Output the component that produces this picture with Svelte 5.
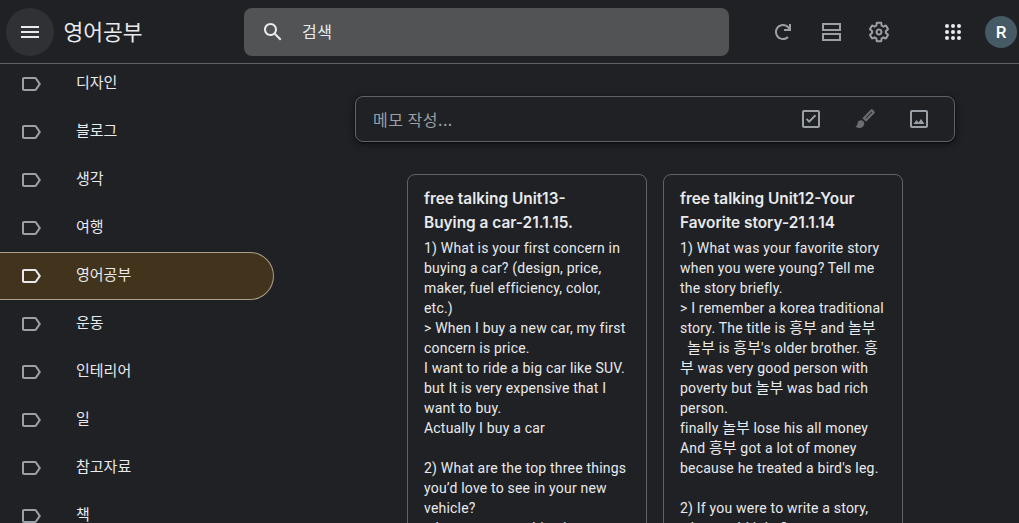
<script lang="ts">
	const labels = ['디자인', '블로그', '생각', '여행', '영어공부', '운동', '인테리어', '일', '참고자료', '책'];
	const selected = '영어공부';

	const labelPath =
		'M17.63 5.84C17.27 5.33 16.67 5 16 5L5 5.01C3.9 5.01 3 5.9 3 7v10c0 1.1.9 1.99 2 1.99L16 19c.67 0 1.27-.33 1.63-.84L22 12l-4.37-6.16zM16 17H5V7h11l3.55 5L16 17z';
	const boxPath =
		'M19 3H5c-1.1 0-2 .9-2 2v14c0 1.1.9 2 2 2h14c1.1 0 2-.9 2-2V5c0-1.1-.9-2-2-2zm0 16H5V5h14v14z';

	const notes = [
		{
			title: ['free talking Unit13-', 'Buying a car-21.1.15.'],
			lines: [
				'1) What is your first concern in',
				'buying a car? (design, price,',
				'maker, fuel efficiency, color,',
				'etc.)',
				'> When I buy a new car, my first',
				'concern is price.',
				'I want to ride a big car like SUV.',
				'but It is very expensive that I',
				'want to buy.',
				'Actually I buy a car',
				'',
				'2) What are the top three things',
				'you’d love to see in your new',
				'vehicle?',
				'> I want to see a big size'
			]
		},
		{
			title: ['free talking Unit12-Your', 'Favorite story-21.1.14'],
			lines: [
				'1) What was your favorite story',
				'when you were young? Tell me',
				'the story briefly.',
				'> I remember a korea traditional',
				'story. The title is 흥부 and 놀부',
				'  놀부 is 흥부\'s older brother. 흥',
				'부 was very good person with',
				'poverty but 놀부 was bad rich',
				'person.',
				'finally 놀부 lose his all money',
				'And 흥부 got a lot of money',
				'because he treated a bird\'s leg.',
				'',
				'2) If you were to write a story,',
				'who would it be?'
			]
		}
	];

	// hangul runs sit in a slightly larger size, latin stays at 14px
	const split = (line: string) => line.split(/([가-힣]+)/);
</script>

<div class="page">
	<header class="topbar">
		<div class="brand">
			<button class="menu" aria-label="메뉴">
				<svg width="24" height="24" viewBox="0 0 24 24"><path d="M3 18h18v-2H3v2zm0-5h18v-2H3v2zm0-7v2h18V6H3z" /></svg>
			</button>
			<span class="brand-title">영어공부</span>
		</div>
		<div class="search">
			<svg width="24" height="24" viewBox="0 0 24 24"><path d="M20.49 19l-5.73-5.73C15.53 12.2 16 10.91 16 9.5 16 5.91 13.09 3 9.5 3S3 5.91 3 9.5 5.91 16 9.5 16c1.41 0 2.7-.47 3.77-1.24L19 20.49 20.49 19zM5 9.5C5 7.01 7.01 5 9.5 5S14 7.01 14 9.5 11.99 14 9.5 14 5 11.99 5 9.5z" /></svg>
			<span>검색</span>
		</div>
		<div class="actions">
			<svg class="tool" width="24" height="24" viewBox="0 0 24 24"><path d="M13 9v2h7V4h-2v2.74C16.53 5.07 14.4 4 12 4c-2.21 0-4.21.9-5.66 2.34S4 9.79 4 12c0 4.42 3.58 8 8 8 2.21 0 4.21-.9 5.66-2.34l-1.42-1.42A5.98 5.98 0 0 1 12 18c-3.31 0-6-2.69-6-6 0-1.65.67-3.15 1.76-4.24A5.98 5.98 0 0 1 12 6a6.01 6.01 0 0 1 5.19 3H13z" /></svg>
			<svg class="tool" width="24" height="24" viewBox="0 0 24 24"><path d="M3 3h19v8H3V3zm2 2v4h15V5H5zM3 13h19v8H3v-8zm2 2v4h15v-4H5z" /></svg>
			<svg class="tool" width="24" height="24" viewBox="0 0 24 24"><path d="M13.85 22.25h-3.7c-.74 0-1.36-.54-1.45-1.27l-.27-1.89c-.27-.14-.53-.29-.79-.46l-1.8.72c-.7.26-1.47-.03-1.81-.65L2.2 15.53c-.35-.66-.2-1.44.36-1.88l1.53-1.19c-.01-.15-.02-.3-.02-.46 0-.15.01-.31.02-.46l-1.52-1.19c-.59-.45-.74-1.26-.37-1.88l1.85-3.19c.34-.62 1.11-.9 1.79-.63l1.81.73c.26-.17.52-.32.78-.46l.27-1.91c.09-.7.71-1.25 1.44-1.25h3.7c.74 0 1.36.54 1.45 1.27l.27 1.89c.27.14.53.29.79.46l1.8-.72c.71-.26 1.48.03 1.82.65l1.84 3.18c.36.66.2 1.44-.36 1.88l-1.52 1.19c.01.15.02.3.02.46s-.01.31-.02.46l1.52 1.19c.56.45.72 1.23.37 1.86l-1.86 3.22c-.34.62-1.11.9-1.8.63l-1.8-.72c-.26.17-.52.32-.78.46l-.27 1.91c-.1.68-.72 1.22-1.45 1.22zm-3.23-2h2.76l.37-2.55.53-.22c.44-.18.88-.44 1.34-.78l.45-.34 2.38.96 1.38-2.4-2.03-1.58.07-.56c.03-.26.06-.51.06-.78s-.03-.53-.06-.78l-.07-.56 2.03-1.58-1.39-2.4-2.39.96-.45-.35c-.42-.32-.87-.58-1.33-.77l-.52-.22-.37-2.55h-2.76l-.37 2.55-.53.21c-.44.19-.88.44-1.34.79l-.45.33-2.38-.95-1.39 2.39 2.03 1.58-.07.56a7 7 0 0 0-.06.79c0 .26.02.53.06.78l.07.56-2.03 1.58 1.38 2.4 2.39-.96.45.35c.43.33.86.58 1.33.77l.53.22.38 2.55zM12 15.5c-1.93 0-3.5-1.57-3.5-3.5s1.57-3.5 3.5-3.5 3.5 1.57 3.5 3.5-1.57 3.5-3.5 3.5zm0-5c-.83 0-1.5.67-1.5 1.5s.67 1.5 1.5 1.5 1.5-.67 1.5-1.5-.67-1.5-1.5-1.5z" /></svg>
			<svg class="apps" width="24" height="24" viewBox="0 0 24 24">
				{#each [4, 10, 16] as y}
					{#each [4, 10, 16] as x}
						<circle cx={x + 2} cy={y + 2} r="2" />
					{/each}
				{/each}
			</svg>
			<div class="avatar">R</div>
		</div>
	</header>

	<div class="body">
		<nav class="sidebar">
			{#each labels as label}
				<div class="nav-item" class:active={label === selected}>
					<svg width="24" height="24" viewBox="0 0 24 24"><path d={labelPath} /></svg>
					<span>{label}</span>
				</div>
			{/each}
		</nav>

		<main class="content">
			<div class="compose">
				<span class="placeholder">메모 작성...</span>
				<div class="compose-icons">
					<svg width="24" height="24" viewBox="0 0 24 24"><path d={boxPath} /><path d="M10.2 16 6.8 12.6l1.4-1.4 2 2 5.6-5.6 1.4 1.4z" /></svg>
					<svg class="dim" width="24" height="24" viewBox="0 0 24 24"><path d="M19.6 2.6l1.8 1.8c.5.5.5 1.300 0 1.800l-8.400 8.600-3.600-3.600 8.400-8.600c.5-.5 1.300-.5 1.800 0zm-.9 2-6.400 6.600.6.6 6.400-6.600-.6-.6z" /><path d="M8 13.200c-2 0-3.400 1.500-3.500 3.400-.1 1.500-.8 2.500-2 3 .9 1 2.300 1.400 3.800 1.400 2.700 0 5-2 5-4.500 0-1.900-1.500-3.300-3.300-3.300z" /></svg>
					<svg width="24" height="24" viewBox="0 0 24 24"><path d={boxPath} /><path d="M6.500 17 9.500 13l2 2.500 2.500-3.500 3.500 5z" /></svg>
				</div>
			</div>

			<div class="notes">
				{#each notes as note}
					<article class="note">
						<h3>
							{#each note.title as t}
								<span>{t}</span>
							{/each}
						</h3>
						<div class="note-text">
							{#each note.lines as line}
								<div class="line">{#each split(line) as part, i}{#if i % 2}<span class="ko">{part}</span>{:else}{part}{/if}{/each}</div>
							{/each}
						</div>
					</article>
				{/each}
			</div>
		</main>
	</div>
</div>

<style>
	:global(body) {
		background: #202124;
		overflow: hidden;
	}

	.page {
		height: 523px;
		overflow: hidden;
		background: #202124;
		color: #e8eaed;
		font-family: Roboto, "Noto Sans CJK KR", sans-serif;
	}

	.topbar {
		display: flex;
		align-items: center;
		height: 63px;
		border-bottom: 1px solid #5f6368;
	}

	.brand {
		display: flex;
		align-items: center;
		width: 244px;
		flex-shrink: 0;
		padding-left: 6px;
		box-sizing: border-box;
	}

	.menu {
		width: 48px;
		height: 48px;
		border: none;
		border-radius: 50%;
		background: #303134;
		display: flex;
		align-items: center;
		justify-content: center;
		padding: 0;
	}

	.menu svg {
		fill: #e8eaed;
	}

	.brand-title {
		margin-left: 9.5px;
		margin-top: -3px;
		font-family: "Noto Sans CJK KR", sans-serif;
		font-size: 21.5px;
		color: #e8eaed;
	}

	.search {
		width: 485px;
		height: 48px;
		flex-shrink: 0;
		background: #525355;
		border-radius: 8px;
		display: flex;
		align-items: center;
		padding-left: 17px;
		box-sizing: border-box;
		font-family: "Noto Sans CJK KR", sans-serif;
		font-size: 16px;
		letter-spacing: 0.5px;
	}

	.search svg {
		fill: #e8eaed;
	}

	.search span {
		margin-left: 17px;
		margin-top: -2px;
	}

	.actions {
		flex: 1;
		display: flex;
		align-items: center;
		padding-left: 42px;
	}

	.tool {
		fill: #9aa0a6;
		margin-right: 24px;
	}

	.tool:nth-child(3) {
		margin-right: 50px;
	}

	.apps {
		fill: #e8eaed;
		margin-right: 20px;
	}

	.avatar {
		width: 32px;
		height: 32px;
		border-radius: 50%;
		background: #455a64;
		color: #fff;
		display: flex;
		align-items: center;
		justify-content: center;
		font-size: 17px;
		font-weight: 500;
		flex-shrink: 0;
	}

	.body {
		display: flex;
		height: 459px;
		overflow: hidden;
	}

	.sidebar {
		width: 280px;
		flex-shrink: 0;
		margin-top: -4px;
	}

	.nav-item {
		display: flex;
		align-items: center;
		width: 274px;
		height: 48px;
		box-sizing: border-box;
		padding-left: 19px;
		border-radius: 0 24px 24px 0;
		font-family: "Noto Sans CJK KR", sans-serif;
		font-size: 15px;
		color: #e8eaed;
	}

	.nav-item svg {
		fill: #9aa0a6;
		flex-shrink: 0;
	}

	.nav-item span {
		margin-left: 33px;
		margin-top: -5px;
	}

	.nav-item.active {
		background: #41331c;
		border: 1px solid #ab9f8c;
		border-left: none;
	}

	.nav-item.active svg {
		fill: #e8eaed;
	}

	.content {
		flex: 1;
		min-width: 0;
		padding: 32px 0 0 75px;
		overflow: hidden;
	}

	.compose {
		width: 600px;
		height: 46px;
		box-sizing: border-box;
		border: 1px solid #5f6368;
		border-radius: 8px;
		display: flex;
		align-items: center;
		justify-content: space-between;
		padding-left: 17px;
		box-shadow: 0 1px 2px 0 rgba(0, 0, 0, 0.6), 0 2px 6px 2px rgba(0, 0, 0, 0.3);
	}

	.placeholder {
		font-family: "Noto Sans CJK KR", sans-serif;
		font-size: 16px;
		letter-spacing: 0.5px;
		color: #9aa0a6;
	}

	.compose-icons {
		display: flex;
		gap: 30px;
		padding-right: 23px;
	}

	.compose-icons svg {
		fill: #9aa0a6;
	}

	.compose-icons svg.dim {
		fill: #6b6e72;
	}

	.notes {
		width: 600px;
		margin-top: 32px;
		display: flex;
		justify-content: center;
		gap: 16px;
	}

	.note {
		width: 240px;
		height: 400px;
		flex-shrink: 0;
		box-sizing: border-box;
		border: 1px solid #5f6368;
		border-radius: 8px;
		padding: 12px 16px 0;
	}

	.note h3 {
		margin: 0 0 3px;
		font-family: Inter, Roboto, sans-serif;
		font-size: 15.4px;
		font-weight: 600;
		line-height: 24px;
		color: #e8eaed;
	}

	.note h3 span {
		display: block;
	}

	.note-text {
		font-size: 14px;
		line-height: 20px;
		letter-spacing: 0.2px;
		color: #e8eaed;
	}

	.line {
		height: 20px;
		white-space: pre;
	}

	.ko {
		font-size: 15px;
		line-height: 1;
		letter-spacing: 0;
	}
</style>
